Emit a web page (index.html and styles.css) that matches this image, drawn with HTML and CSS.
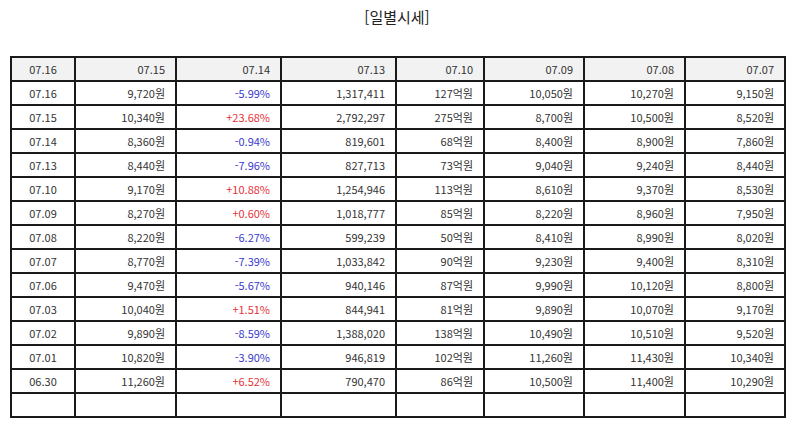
FILE: index.html
```html
<!DOCTYPE html>
<html lang="ko">
<head>
<meta charset="utf-8">
<title>일별시세</title>
<link rel="stylesheet" href="styles.css">
</head>
<body>
<h2 class="title">[일별시세]</h2>
<table class="daily">
  <colgroup>
    <col class="c1"><col class="c2"><col class="c3"><col class="c4"><col class="c5"><col class="c6"><col class="c7"><col class="c8">
  </colgroup>
  <thead>
    <tr><th class="date">07.16</th><th>07.15</th><th>07.14</th><th>07.13</th><th>07.10</th><th>07.09</th><th>07.08</th><th>07.07</th></tr>
  </thead>
  <tbody>
    <tr><td class="date">07.16</td><td>9,720원</td><td class="down">-5.99%</td><td>1,317,411</td><td>127억원</td><td>10,050원</td><td>10,270원</td><td>9,150원</td></tr>
    <tr><td class="date">07.15</td><td>10,340원</td><td class="up">+23.68%</td><td>2,792,297</td><td>275억원</td><td>8,700원</td><td>10,500원</td><td>8,520원</td></tr>
    <tr><td class="date">07.14</td><td>8,360원</td><td class="down">-0.94%</td><td>819,601</td><td>68억원</td><td>8,400원</td><td>8,900원</td><td>7,860원</td></tr>
    <tr><td class="date">07.13</td><td>8,440원</td><td class="down">-7.96%</td><td>827,713</td><td>73억원</td><td>9,040원</td><td>9,240원</td><td>8,440원</td></tr>
    <tr><td class="date">07.10</td><td>9,170원</td><td class="up">+10.88%</td><td>1,254,946</td><td>113억원</td><td>8,610원</td><td>9,370원</td><td>8,530원</td></tr>
    <tr><td class="date">07.09</td><td>8,270원</td><td class="up">+0.60%</td><td>1,018,777</td><td>85억원</td><td>8,220원</td><td>8,960원</td><td>7,950원</td></tr>
    <tr><td class="date">07.08</td><td>8,220원</td><td class="down">-6.27%</td><td>599,239</td><td>50억원</td><td>8,410원</td><td>8,990원</td><td>8,020원</td></tr>
    <tr><td class="date">07.07</td><td>8,770원</td><td class="down">-7.39%</td><td>1,033,842</td><td>90억원</td><td>9,230원</td><td>9,400원</td><td>8,310원</td></tr>
    <tr><td class="date">07.06</td><td>9,470원</td><td class="down">-5.67%</td><td>940,146</td><td>87억원</td><td>9,990원</td><td>10,120원</td><td>8,800원</td></tr>
    <tr><td class="date">07.03</td><td>10,040원</td><td class="up">+1.51%</td><td>844,941</td><td>81억원</td><td>9,890원</td><td>10,070원</td><td>9,170원</td></tr>
    <tr><td class="date">07.02</td><td>9,890원</td><td class="down">-8.59%</td><td>1,388,020</td><td>138억원</td><td>10,490원</td><td>10,510원</td><td>9,520원</td></tr>
    <tr><td class="date">07.01</td><td>10,820원</td><td class="down">-3.90%</td><td>946,819</td><td>102억원</td><td>11,260원</td><td>11,430원</td><td>10,340원</td></tr>
    <tr><td class="date">06.30</td><td>11,260원</td><td class="up">+6.52%</td><td>790,470</td><td>86억원</td><td>10,500원</td><td>11,400원</td><td>10,290원</td></tr>
    <tr><td class="date"></td><td></td><td></td><td></td><td></td><td></td><td></td><td></td></tr>
  </tbody>
</table>
</body>
</html>
```

FILE: styles.css
```css
html, body {
  margin: 0;
  padding: 0;
  background: #ffffff;
}

body {
  font-family: "Noto Sans CJK KR", "Noto Sans", sans-serif;
  color: #333333;
}

.title {
  margin: 0;
  padding-top: 7px;
  height: 20px;
  line-height: 20px;
  font-size: 15px;
  font-weight: normal;
  text-align: center;
  color: #222222;
}

.daily {
  margin: 29px 0 0 10px;
  width: 774px;
  table-layout: fixed;
  border-collapse: collapse;
  font-size: 11px;
}

.c1 { width: 64px; }
.c2 { width: 101px; }
.c3 { width: 105px; }
.c4 { width: 115px; }
.c5 { width: 88px; }
.c6 { width: 100px; }
.c7 { width: 101px; }
.c8 { width: 100px; }

.daily th,
.daily td {
  border: 2px solid #1a1a1a;
  height: 22px;
  padding: 0 10px 0 4px;
  text-align: right;
  font-weight: normal;
  line-height: 14px;
  white-space: nowrap;
}

.daily th {
  background: #f2f2f2;
}

.daily .date {
  text-align: center;
  padding: 0;
}

.daily .up {
  color: #e53238;
}

.daily .down {
  color: #3a3acc;
}
```
